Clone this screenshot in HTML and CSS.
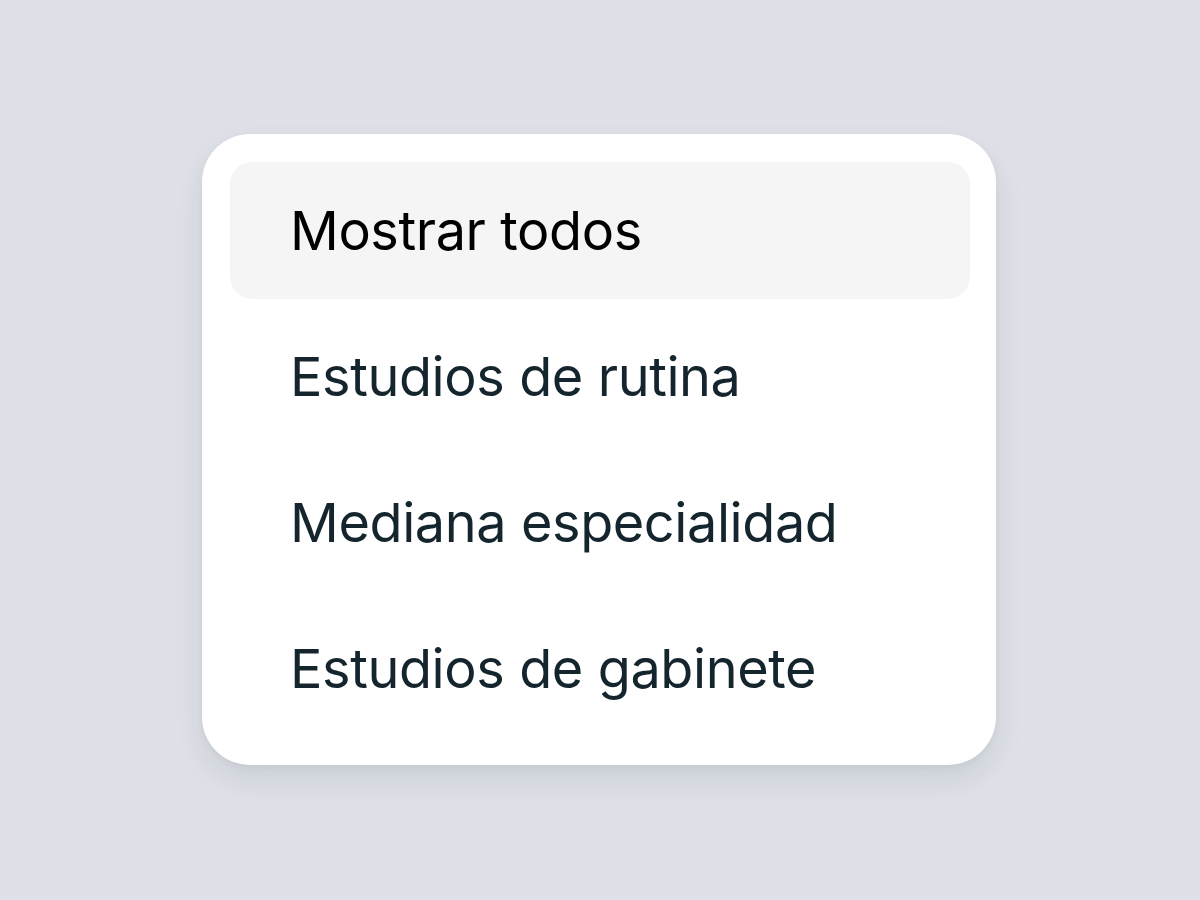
FILE: index.html
```html
<!DOCTYPE html>
<html lang="es">
<head>
<meta charset="utf-8">
<title>Filtro</title>
<link rel="stylesheet" href="styles.css">
</head>
<body>
<div class="stage">
  <ul class="menu">
    <li class="item active">Mostrar todos</li>
    <li class="item">Estudios de rutina</li>
    <li class="item">Mediana especialidad</li>
    <li class="item">Estudios de gabinete</li>
  </ul>
</div>
</body>
</html>
```

FILE: styles.css
```css
html, body {
  margin: 0;
  padding: 0;
}
body {
  background: #dee1e7;
  font-family: Inter, "Noto Sans", "Liberation Sans", sans-serif;
  width: 1200px;
  height: 900px;
}
.stage {
  display: flex;
  justify-content: center;
  padding-top: 134px;
}
.menu {
  list-style: none;
  margin: 0 0 0 -2px;
  padding: 28px 26px 28px 28px;
  width: 740px;
  background: #ffffff;
  border-radius: 48px;
  box-shadow: 0 14px 30px rgba(30, 40, 60, 0.10), 0 2px 6px rgba(30, 40, 60, 0.04);
  display: flex;
  flex-direction: column;
  gap: 9px;
}
.item {
  height: 137px;
  display: flex;
  align-items: center;
  padding-left: 60px;
  border-radius: 22px;
  font-size: 54px;
  color: #15252d;
  letter-spacing: -0.4px;
}
.item.active {
  background: #f5f5f5;
  color: #000000;
}
```
